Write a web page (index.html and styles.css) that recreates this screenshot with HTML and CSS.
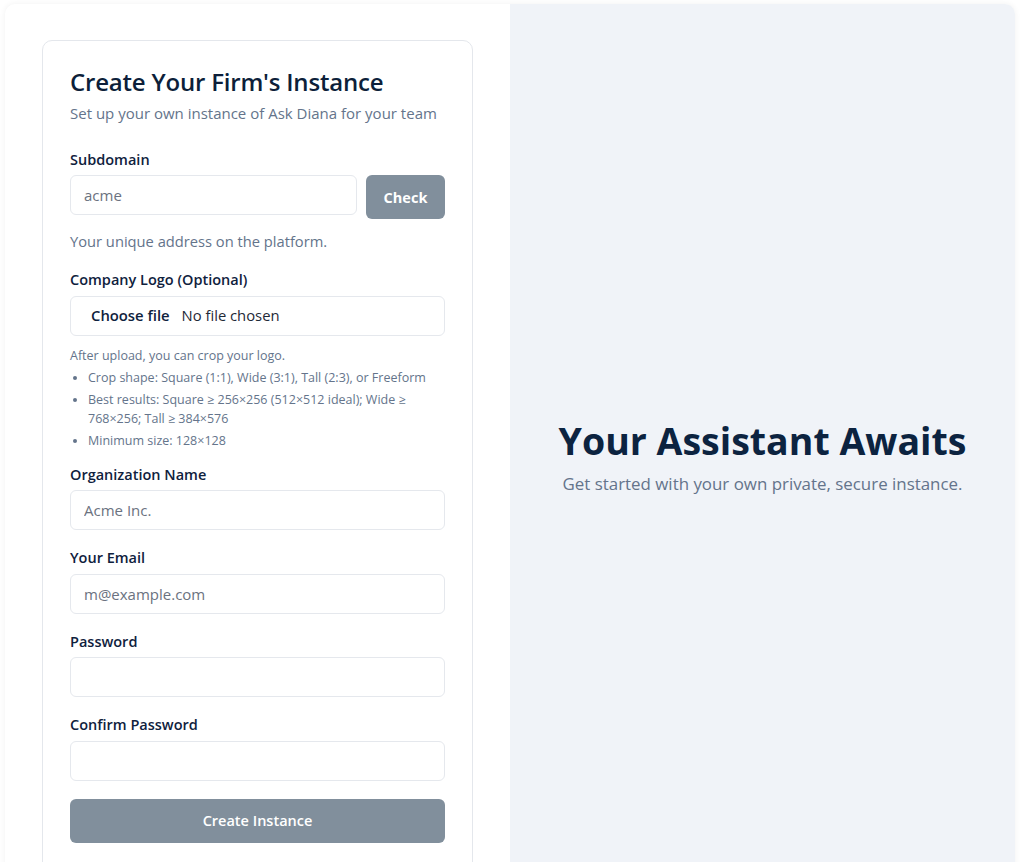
FILE: index.html
```html
<!DOCTYPE html>
<html lang="en">
<head>
<meta charset="utf-8">
<title>Create Your Firm's Instance</title>
<link rel="stylesheet" href="styles.css">
</head>
<body>
<div class="shell">
  <section class="left">
    <div class="card">
      <h1 class="title">Create Your Firm's Instance</h1>
      <p class="subtitle">Set up your own instance of Ask Diana for your team</p>

      <div class="field field-first">
        <label class="label">Subdomain</label>
        <div class="row">
          <input class="input" type="text" placeholder="acme">
          <button class="btn-check" type="button">Check</button>
        </div>
        <p class="help">Your unique address on the platform.</p>
      </div>

      <div class="field">
        <label class="label">Company Logo (Optional)</label>
        <div class="file">
          <span class="file-btn">Choose file</span>
          <span class="file-name">No file chosen</span>
        </div>
        <div class="notes">
          <p class="note-head">After upload, you can crop your logo.</p>
          <ul class="note-list">
            <li>Crop shape: Square (1:1), Wide (3:1), Tall (2:3), or Freeform</li>
            <li>Best results: Square ≥ 256×256 (512×512 ideal); Wide ≥ 768×256; Tall ≥ 384×576</li>
            <li>Minimum size: 128×128</li>
          </ul>
        </div>
      </div>

      <div class="field field-tight">
        <label class="label">Organization Name</label>
        <input class="input" type="text" placeholder="Acme Inc.">
      </div>

      <div class="field">
        <label class="label">Your Email</label>
        <input class="input" type="email" placeholder="m@example.com">
      </div>

      <div class="field">
        <label class="label">Password</label>
        <input class="input" type="password">
      </div>

      <div class="field">
        <label class="label">Confirm Password</label>
        <input class="input" type="password">
      </div>

      <button class="btn-submit" type="button">Create Instance</button>
    </div>
  </section>
  <section class="right">
    <h2 class="hero-title">Your Assistant Awaits</h2>
    <p class="hero-sub">Get started with your own private, secure instance.</p>
  </section>
</div>
</body>
</html>
```

FILE: styles.css
```css
* { box-sizing: border-box; }

html, body {
  margin: 0;
  padding: 0;
  background: #ffffff;
  height: 100%;
  overflow: hidden;
}

body {
  font-family: "Open Sans", "Noto Sans", sans-serif;
  color: #0f213d;
}

.shell {
  margin: 4px 7px 0 5px;
  height: 900px;
  display: grid;
  grid-template-columns: 505px 1fr;
  background: #ffffff;
  border-radius: 10px;
  box-shadow: 0 0 6px rgba(0, 0, 0, 0.06);
}

.left {
  padding: 36px 37px 0 37px;
}

.card {
  border: 1px solid #e4e7ec;
  border-radius: 10px;
  padding: 24px 27px 40px 27px;
  background: #fff;
}

.title {
  margin: 0;
  font-size: 24px;
  font-weight: 600;
  letter-spacing: -0.2px;
  line-height: 34px;
  color: #0d1f3a;
}

.subtitle {
  margin: 3px 0 0 0;
  font-size: 15px;
  line-height: 22px;
  color: #64748b;
}

.field {
  display: flex;
  flex-direction: column;
  margin-top: 17px;
}

.field-first { margin-top: 24.5px; }
.field-tight { margin-top: 11px; }

.label {
  font-size: 14.5px;
  font-weight: 600;
  line-height: 22px;
  color: #0f213d;
  margin-bottom: 4.5px;
}

.row {
  display: flex;
  gap: 9px;
  align-items: flex-start;
}

.input {
  width: 100%;
  height: 40px;
  border: 1px solid #e5e8ed;
  border-radius: 6px;
  padding: 0 13px;
  font-family: inherit;
  font-size: 15px;
  color: #0f213d;
  background: #fff;
  outline: none;
}

.input::placeholder { color: #6b7280; }

.row .input { flex: 1; }

.btn-check {
  flex: none;
  width: 79px;
  height: 44px;
  border: none;
  border-radius: 6px;
  background: #818f9c;
  color: #fff;
  font-family: inherit;
  font-size: 14.5px;
  font-weight: 700;
}

.help {
  margin: 11px 0 0 0;
  font-size: 14.7px;
  line-height: 22px;
  color: #64748b;
}

.file {
  height: 40px;
  border: 1px solid #e5e8ed;
  border-radius: 6px;
  display: flex;
  align-items: center;
  padding-left: 20px;
  padding-bottom: 2px;
  font-size: 14.8px;
}

.file-btn {
  font-weight: 600;
  color: #0f213d;
  margin-right: 12px;
}

.file-name { color: #1f2937; }

.notes {
  margin-top: 10px;
  font-size: 12.5px;
  line-height: 19px;
  color: #64748b;
}

.note-head { margin: 0 0 3px 0; }

.note-list {
  margin: 0;
  padding-left: 18px;
}

.note-list li { margin-bottom: 3px; }
.note-list li::marker { font-size: 11px; }

.btn-submit {
  display: block;
  width: 100%;
  height: 44px;
  margin-top: 18px;
  border: none;
  border-radius: 6px;
  background: #818f9c;
  color: #fff;
  font-family: inherit;
  font-size: 14.5px;
  font-weight: 600;
}

.right {
  background: #f0f3f8;
  border-top-right-radius: 10px;
  display: flex;
  flex-direction: column;
  align-items: center;
  padding-top: 412px;
}

.hero-title {
  margin: 0;
  font-size: 37.5px;
  font-weight: 700;
  line-height: 50px;
  color: #0c2340;
}

.hero-sub {
  margin: 6px 0 0 0;
  font-size: 16.9px;
  line-height: 24px;
  color: #64748b;
}
```
